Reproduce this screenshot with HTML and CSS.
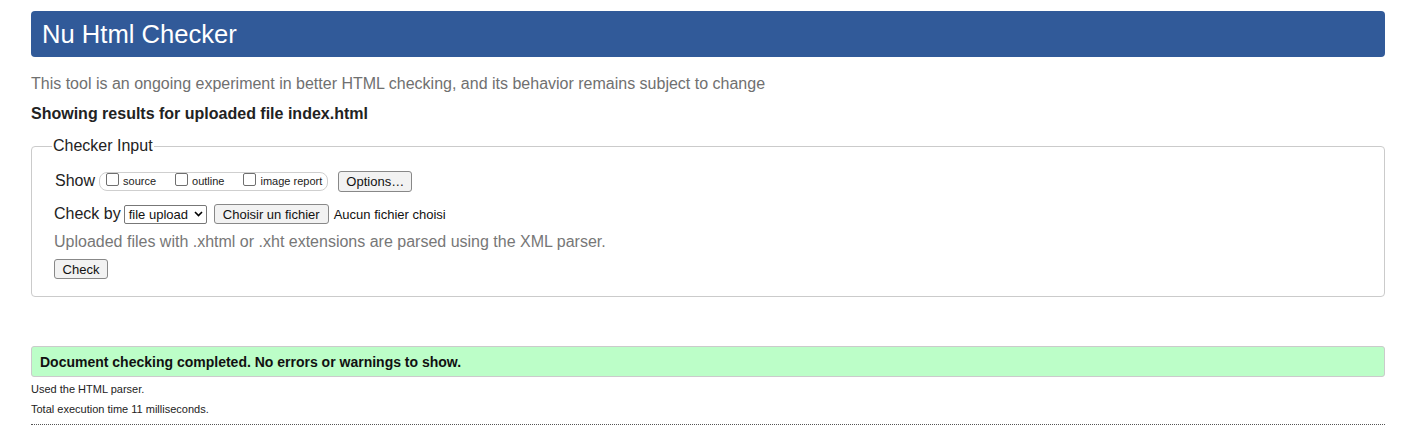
FILE: index.html
```html
<!DOCTYPE html>
<html lang="en">
<head>
<meta charset="utf-8">
<title>Nu Html Checker</title>
<link rel="stylesheet" href="styles.css">
</head>
<body>
<div class="page">
  <h1 class="title">Nu Html Checker</h1>
  <p class="intro">This tool is an ongoing experiment in better HTML checking, and its behavior remains subject to change</p>
  <p class="showing">Showing results for uploaded file index.html</p>
  <fieldset class="input-box">
    <legend class="legend">Checker Input</legend>
    <div class="row">
      <span class="row-label">Show</span>
      <span class="show-group">
        <label class="opt"><span class="cb"></span>source</label>
        <label class="opt"><span class="cb"></span>outline</label>
        <label class="opt"><span class="cb"></span>image report</label>
      </span>
      <span class="btn btn-options">Options…</span>
    </div>
    <div class="row row-check">
      <span class="row-label">Check by</span>
      <span class="select">file upload<svg class="chev" width="9" height="6" viewBox="0 0 9 6"><path d="M1 1 L4.5 4.5 L8 1" fill="none" stroke="#000" stroke-width="1.6"/></svg></span>
      <span class="btn btn-file">Choisir un fichier</span>
      <span class="file-name">Aucun fichier choisi</span>
    </div>
    <p class="note">Uploaded files with .xhtml or .xht extensions are parsed using the XML parser.</p>
    <span class="btn btn-check">Check</span>
  </fieldset>
  <p class="success">Document checking completed. No errors or warnings to show.</p>
  <p class="meta">Used the HTML parser.</p>
  <p class="meta">Total execution time 11 milliseconds.</p>
  <div class="rule"></div>
</div>
</body>
</html>
```
FILE: styles.css
```css
html, body {
  margin: 0;
  padding: 0;
  background: #fff;
}
body {
  font-family: "Liberation Sans", Arial, sans-serif;
  color: #222;
}
.page {
  padding: 11px 31px 0 31px;
}
.title {
  margin: 0;
  height: 46px;
  box-sizing: border-box;
  padding: 9px 11px 0 11px;
  background: #315a99;
  color: #fff;
  font-size: 25.6px;
  font-weight: normal;
  line-height: 29px;
  border-radius: 4px;
}
.intro {
  margin: 17px 0 0 0;
  font-size: 16px;
  line-height: 20px;
  color: #707070;
}
.showing {
  margin: 10px 0 0 0;
  font-size: 16px;
  line-height: 20px;
  font-weight: bold;
  color: #222;
}
.input-box {
  margin: 12px 0 0 0;
  border: 1px solid #cbcbcb;
  border-radius: 4px;
  padding: 14px 22px 17px 22px;
}
.legend {
  font-size: 16px;
  line-height: 20px;
  padding: 0 1px;
  margin-left: -2px;
  color: #222;
}
.row {
  display: flex;
  align-items: center;
  height: 22px;
}
.row-check {
  margin-top: 11px;
}
.row-label {
  font-size: 16px;
  color: #222;
  margin-right: 4px;
}
.row-label:first-child {
  margin-left: 1px;
}
.row-check .row-label {
  margin-left: 0;
  margin-right: 3px;
}
.show-group {
  display: flex;
  align-items: center;
  height: 19px;
  box-sizing: border-box;
  border: 1px solid #cfcfcf;
  border-radius: 8px;
  padding: 0 5px 0 6px;
  margin-right: 10px;
}
.opt {
  display: flex;
  align-items: center;
  font-size: 11px;
  color: #222;
  margin-right: 19px;
}
.opt:last-child {
  margin-right: 0;
}
.cb {
  width: 11px;
  height: 11px;
  border: 1px solid #6f6f6f;
  border-radius: 2px;
  margin-right: 4px;
  position: relative;
  top: -2px;
}
.btn {
  display: inline-flex;
  align-items: center;
  justify-content: center;
  box-sizing: border-box;
  height: 21px;
  padding: 0 7px;
  border: 1px solid #888;
  border-radius: 3px;
  background: #f2f2f2;
  font-size: 13px;
  color: #111;
}
.btn-options {
  width: 74px;
}
.select {
  display: inline-flex;
  align-items: center;
  box-sizing: border-box;
  height: 19px;
  width: 83px;
  padding: 0 3px 0 4px;
  border: 1px solid #777;
  border-radius: 2px;
  font-size: 13px;
  color: #111;
  justify-content: space-between;
  margin-right: 7px;
}
.chev {
  display: block;
}
.btn-file {
  width: 115px;
  height: 20px;
}
.file-name {
  font-size: 13px;
  color: #111;
  margin-left: 5px;
}
.note {
  margin: 7px 0 0 0;
  font-size: 16px;
  line-height: 20px;
  color: #777;
}
.btn-check {
  margin-top: 7px;
  width: 54px;
  height: 20px;
}
.success {
  margin: 49px 0 0 0;
  height: 31px;
  box-sizing: border-box;
  padding: 0 8px;
  display: flex;
  align-items: center;
  background: #bcfec8;
  border: 1px solid #cbcbcb;
  border-radius: 3px;
  font-size: 14px;
  font-weight: bold;
  color: #111;
}
.meta {
  margin: 0;
  font-size: 11px;
  line-height: 20px;
  color: #222;
}
.success + .meta {
  margin-top: 2px;
}
.rule {
  margin-top: 5px;
  border-top: 1px dotted #555;
}
```
